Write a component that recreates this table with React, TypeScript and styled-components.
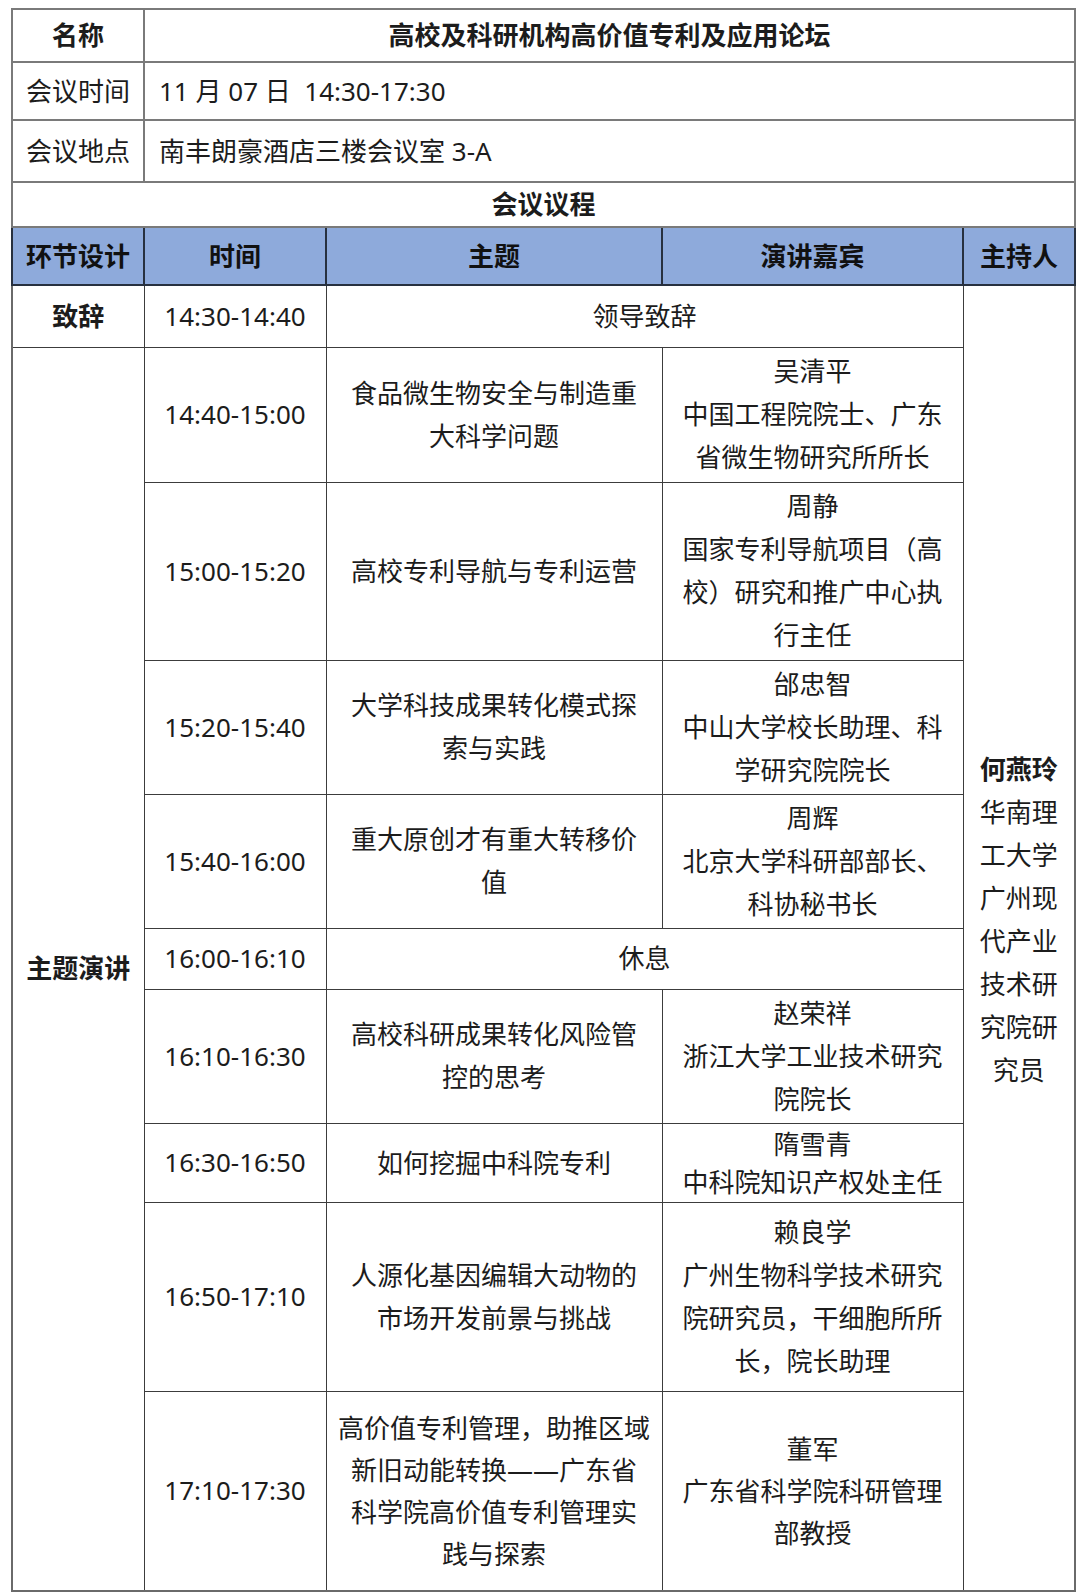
import React from 'react';
import styled, { createGlobalStyle } from 'styled-components';

const GlobalStyle = createGlobalStyle`
    html, body {
        margin: 0;
        padding: 0;
        background: #ffffff;
    }
    body {
        font-family: 'Noto Sans', 'Noto Sans CJK SC', sans-serif;
        color: #1c1c1c;
    }
`;

const St = {
    Page: styled.div`
        width: 1080px;
        height: 1596px;
        padding: 8px 0 0 11px;
        box-sizing: border-box;
        overflow: hidden;
    `,
    Table: styled.table`
        width: 1063px;
        border-collapse: collapse;
        table-layout: fixed;
        border: 2px solid #6a6a6a;
        font-size: 26px;
        line-height: 43px;
    `,
    Row: styled.tr<{ $h: number }>`
        height: ${({ $h }) => $h}px;
    `,
    Cell: styled.td<{ $bold?: boolean; $align?: 'left' | 'center'; $lh?: number }>`
        border: 1px solid #3c3c3c;
        padding: ${({ $align }) => ($align === 'left' ? '0 0 0 14px' : '0')};
        text-align: ${({ $align }) => $align ?? 'center'};
        vertical-align: middle;
        font-weight: ${({ $bold }) => ($bold ? 700 : 400)};
        line-height: ${({ $lh }) => ($lh ? `${$lh}px` : 'inherit')};
        white-space: nowrap;
    `,
    TopCell: styled.td<{ $bold?: boolean; $align?: 'left' | 'center' }>`
        border: 2px solid #7a7a7a;
        padding: ${({ $align }) => ($align === 'left' ? '0 0 0 14px' : '0')};
        text-align: ${({ $align }) => $align ?? 'center'};
        vertical-align: middle;
        font-weight: ${({ $bold }) => ($bold ? 700 : 400)};
        white-space: nowrap;
    `,
    HeadCell: styled.th`
        background: #8eaadb;
        border: 2px solid #27303f;
        font-weight: 700;
        text-align: center;
        vertical-align: middle;
        padding: 0;
        color: #111;
    `,
    Host: styled.td`
        border: 1px solid #3c3c3c;
        text-align: center;
        vertical-align: middle;
        padding: 0 0 36px 0;
    `,
    HostName: styled.div`
        font-weight: 700;
    `,
};

type Talk = { time: string; topic: string[]; speaker: string[]; h: number; lh?: number };

const talks: Talk[] = [
    { time: '14:40-15:00', topic: ['食品微生物安全与制造重', '大科学问题'], speaker: ['吴清平', '中国工程院院士、广东', '省微生物研究所所长'], h: 135 },
    { time: '15:00-15:20', topic: ['高校专利导航与专利运营'], speaker: ['周静', '国家专利导航项目（高', '校）研究和推广中心执', '行主任'], h: 178 },
    { time: '15:20-15:40', topic: ['大学科技成果转化模式探', '索与实践'], speaker: ['邰忠智', '中山大学校长助理、科', '学研究院院长'], h: 134 },
    { time: '15:40-16:00', topic: ['重大原创才有重大转移价', '值'], speaker: ['周辉', '北京大学科研部部长、', '科协秘书长'], h: 134 },
];

const talks2: Talk[] = [
    { time: '16:10-16:30', topic: ['高校科研成果转化风险管', '控的思考'], speaker: ['赵荣祥', '浙江大学工业技术研究', '院院长'], h: 134 },
    { time: '16:30-16:50', topic: ['如何挖掘中科院专利'], speaker: ['隋雪青', '中科院知识产权处主任'], h: 79, lh: 38 },
    { time: '16:50-17:10', topic: ['人源化基因编辑大动物的', '市场开发前景与挑战'], speaker: ['赖良学', '广州生物科学技术研究', '院研究员，干细胞所所', '长，院长助理'], h: 189 },
    {
        time: '17:10-17:30',
        topic: ['高价值专利管理，助推区域', '新旧动能转换——广东省', '科学院高价值专利管理实', '践与探索'],
        speaker: ['董军', '广东省科学院科研管理', '部教授'],
        h: 200,
        lh: 42,
    },
];

const Lines = ({ lines }: { lines: string[] }) => (
    <>
        {lines.map((l, i) => (
            <React.Fragment key={i}>
                {i > 0 && <br />}
                {l}
            </React.Fragment>
        ))}
    </>
);

const TalkRow = ({ talk, lead }: { talk: Talk; lead?: React.ReactNode }) => (
    <St.Row $h={talk.h}>
        {lead}
        <St.Cell>{talk.time}</St.Cell>
        <St.Cell $lh={talk.lh}>
            <Lines lines={talk.topic} />
        </St.Cell>
        <St.Cell $lh={talk.lh}>
            <Lines lines={talk.speaker} />
        </St.Cell>
    </St.Row>
);

const hostLines = ['华南理', '工大学', '广州现', '代产业', '技术研', '究院研', '究员'];

export default function App() {
    return (
        <>
            <GlobalStyle />
            <St.Page>
                <St.Table>
                    <colgroup>
                        <col style={{ width: 132 }} />
                        <col style={{ width: 182 }} />
                        <col style={{ width: 336 }} />
                        <col style={{ width: 301 }} />
                        <col style={{ width: 112 }} />
                    </colgroup>
                    <tbody>
                        <St.Row $h={53}>
                            <St.TopCell $bold>名称</St.TopCell>
                            <St.TopCell $bold colSpan={4}>
                                高校及科研机构高价值专利及应用论坛
                            </St.TopCell>
                        </St.Row>
                        <St.Row $h={58}>
                            <St.TopCell>会议时间</St.TopCell>
                            <St.TopCell $align="left" colSpan={4}>
                                11 月 07 日&nbsp; 14:30-17:30
                            </St.TopCell>
                        </St.Row>
                        <St.Row $h={62}>
                            <St.TopCell>会议地点</St.TopCell>
                            <St.TopCell $align="left" colSpan={4}>
                                南丰朗豪酒店三楼会议室 3-A
                            </St.TopCell>
                        </St.Row>
                        <St.Row $h={40}>
                            <St.TopCell $bold colSpan={5}>
                                会议议程
                            </St.TopCell>
                        </St.Row>
                        <St.Row $h={58}>
                            <St.HeadCell>环节设计</St.HeadCell>
                            <St.HeadCell>时间</St.HeadCell>
                            <St.HeadCell>主题</St.HeadCell>
                            <St.HeadCell>演讲嘉宾</St.HeadCell>
                            <St.HeadCell>主持人</St.HeadCell>
                        </St.Row>
                        <St.Row $h={62}>
                            <St.Cell $bold>致辞</St.Cell>
                            <St.Cell>14:30-14:40</St.Cell>
                            <St.Cell colSpan={2}>领导致辞</St.Cell>
                            <St.Host rowSpan={10}>
                                <St.HostName>何燕玲</St.HostName>
                                <Lines lines={hostLines} />
                            </St.Host>
                        </St.Row>
                        {talks.map((t, i) => (
                            <TalkRow
                                key={t.time}
                                talk={t}
                                lead={
                                    i === 0 ? (
                                        <St.Cell $bold rowSpan={9}>
                                            主题演讲
                                        </St.Cell>
                                    ) : undefined
                                }
                            />
                        ))}
                        <St.Row $h={61}>
                            <St.Cell>16:00-16:10</St.Cell>
                            <St.Cell colSpan={2}>休息</St.Cell>
                        </St.Row>
                        {talks2.map((t) => (
                            <TalkRow key={t.time} talk={t} />
                        ))}
                    </tbody>
                </St.Table>
            </St.Page>
        </>
    );
}
